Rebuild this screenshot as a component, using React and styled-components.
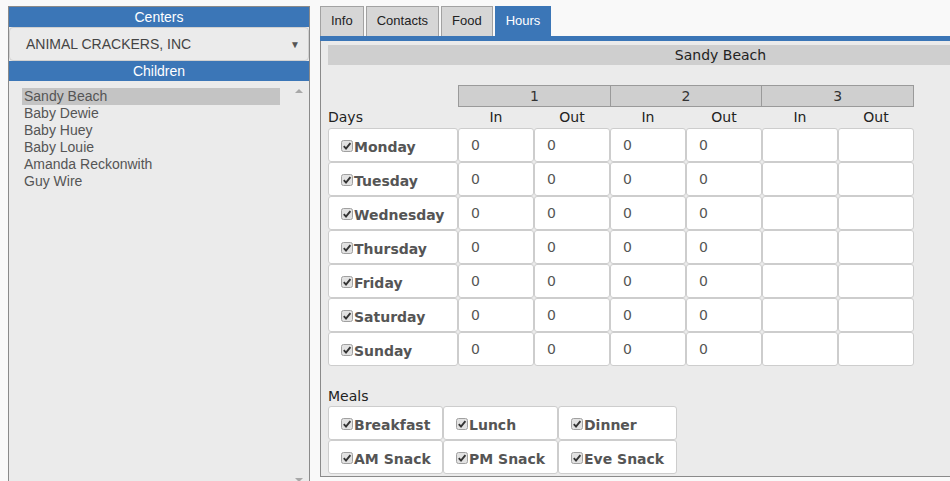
import styled, { createGlobalStyle } from "styled-components";

const GlobalStyle = createGlobalStyle`
    body {
        margin: 0;
        background-color: #f9f9f9;
        overflow: hidden;
    }
`

const Page = styled.div`
    display: flex;
    align-items: flex-start;
    gap: 10px;
    padding: 6px 0 0 8px;
    height: 481px;
    box-sizing: border-box;
`

const LeftPanel = styled.div`
    display: flex;
    flex-direction: column;
    flex: 0 0 302px;
    height: 480px;
    box-sizing: border-box;
    border: 1px solid #8a8a8a;
    border-bottom: none;
    background-color: #ebebeb;
    font-family: "Liberation Sans", Arial, sans-serif;
`

const SectionHeader = styled.div`
    height: 20px;
    line-height: 20px;
    background-color: #3b76b7;
    color: #fff;
    text-align: center;
    font-size: 14px;
`

const SelectBox = styled.div`
    display: flex;
    align-items: center;
    justify-content: space-between;
    height: 34px;
    box-sizing: border-box;
    padding: 0 8px 0 16px;
    border: 1px solid #d0d0d0;
    border-radius: 4px;
    font-size: 14px;
    color: #444;
`

const Arrow = styled.span`
    font-size: 10px;
    color: #555;
`

const ChildList = styled.div`
    position: relative;
    flex: 1;
    padding: 7px 29px 0 13px;
    font-size: 14px;
    color: #555;
`

const ChildItem = styled.div`
    height: 17px;
    line-height: 17px;
    padding-left: 2px;
    background-color: ${props => props.selected ? "#c4c4c4" : "transparent"};
`

const ScrollArrow = styled.span`
    position: absolute;
    right: 6px;
    width: 0;
    height: 0;
    border-left: 4px solid transparent;
    border-right: 4px solid transparent;
    ${props => props.down
        ? "bottom: 4px; border-top: 4px solid #a8a8a8;"
        : "top: 8px; border-bottom: 4px solid #a8a8a8;"}
`

const RightColumn = styled.div`
    flex: 0 0 801px;
    display: flex;
    flex-direction: column;
`

const TabBar = styled.div`
    display: flex;
    gap: 2px;
    height: 30px;
`

const Tab = styled.div`
    box-sizing: border-box;
    height: 30px;
    line-height: 28px;
    padding: 0 10px;
    border: 1px solid ${props => props.active ? "#3b76b7" : "#a2a2a2"};
    border-bottom: none;
    background-color: ${props => props.active ? "#3b76b7" : "#d6d6d6"};
    color: ${props => props.active ? "#fff" : "#222"};
    font-family: "Liberation Sans", Arial, sans-serif;
    font-size: 13px;
`

const BlueBar = styled.div`
    height: 5px;
    background-color: #3b76b7;
`

const ContentPanel = styled.div`
    padding: 4px 7px 2px 7px;
    border: 1px solid #8a8a8a;
    border-top: none;
    background-color: #ebebeb;
    font-family: "DejaVu Sans", Verdana, sans-serif;
    color: #222;
`

const NameBar = styled.div`
    height: 20px;
    line-height: 20px;
    margin-bottom: 20px;
    background-color: #cfcfcf;
    text-align: center;
    font-size: 14px;
`

const HoursGrid = styled.div`
    display: grid;
    grid-template-columns: 130px repeat(6, 76px);
    grid-template-rows: 22px 21px repeat(7, 34px);
`

const GroupRow = styled.div`
    grid-column: 2 / span 6;
    display: flex;
    border: 1px solid #9a9a9a;
    background-color: #cfcfcf;
`

const GroupCell = styled.div`
    flex: 1;
    text-align: center;
    line-height: 20px;
    font-size: 14px;
    color: #333;

    &:not(:first-child) {
        border-left: 1px solid #9a9a9a;
    }
`

const ColLabel = styled.div`
    line-height: 21px;
    font-size: 14px;
    text-align: ${props => props.left ? "left" : "center"};
`

const Cell = styled.div`
    display: flex;
    align-items: center;
    box-sizing: border-box;
    padding: 0 0 1px 12px;
    border: 1px solid #cdcdcd;
    border-radius: 3px;
    background-color: #fff;
    font-size: 14px;
    color: #555;
`

const CheckLabel = styled.span`
    padding: 4px 0 0 1px;
    font-weight: bold;
    font-size: 14px;
    color: #555;
`

const MealsTitle = styled.div`
    padding-top: 20px;
    line-height: 20px;
    font-size: 14px;
`

const MealGrid = styled.div`
    display: grid;
    grid-template-columns: 115px 115px 119px;
    grid-template-rows: repeat(2, 34px);
`

const CheckIcon = () => (
    <svg width="12" height="12" viewBox="0 0 12 12" style={{ flex: "0 0 12px", marginTop: 2 }}>
        <rect x="0.5" y="0.5" width="11" height="11" rx="2" fill="#e2e2e2" stroke="#a0a0a0" />
        <path d="M2.8 6.2 L5 8.6 L9.4 3.2" fill="none" stroke="#333" strokeWidth="1.9" />
    </svg>
)

const CheckCell = ({ label }) => (
    <Cell>
        <CheckIcon />
        <CheckLabel>{label}</CheckLabel>
    </Cell>
)

const children = ["Sandy Beach", "Baby Dewie", "Baby Huey", "Baby Louie", "Amanda Reckonwith", "Guy Wire"]
const tabs = ["Info", "Contacts", "Food", "Hours"]
const days = ["Monday", "Tuesday", "Wednesday", "Thursday", "Friday", "Saturday", "Sunday"]
const meals = ["Breakfast", "Lunch", "Dinner", "AM Snack", "PM Snack", "Eve Snack"]
// two shifts filled, third empty
const times = ["0", "0", "0", "0", "", ""]

const App = () => {
    return (
        <>
            <GlobalStyle />
            <Page>
                <LeftPanel>
                    <SectionHeader>Centers</SectionHeader>
                    <SelectBox>
                        <span>ANIMAL CRACKERS, INC</span>
                        <Arrow>▼</Arrow>
                    </SelectBox>
                    <SectionHeader>Children</SectionHeader>
                    <ChildList>
                        {children.map((name, i) => (
                            <ChildItem key={name} selected={i === 0}>{name}</ChildItem>
                        ))}
                        <ScrollArrow />
                        <ScrollArrow down />
                    </ChildList>
                </LeftPanel>

                <RightColumn>
                    <TabBar>
                        {tabs.map(t => (
                            <Tab key={t} active={t === "Hours"}>{t}</Tab>
                        ))}
                    </TabBar>
                    <BlueBar />
                    <ContentPanel>
                        <NameBar>Sandy Beach</NameBar>
                        <HoursGrid>
                            <div />
                            <GroupRow>
                                <GroupCell>1</GroupCell>
                                <GroupCell>2</GroupCell>
                                <GroupCell>3</GroupCell>
                            </GroupRow>
                            <ColLabel left>Days</ColLabel>
                            {["In", "Out", "In", "Out", "In", "Out"].map((l, i) => (
                                <ColLabel key={i}>{l}</ColLabel>
                            ))}
                            {days.map(day => [
                                <CheckCell key={day} label={day} />,
                                ...times.map((v, i) => (
                                    <Cell key={day + i}>{v}</Cell>
                                ))
                            ])}
                        </HoursGrid>
                        <MealsTitle>Meals</MealsTitle>
                        <MealGrid>
                            {meals.map(m => (
                                <CheckCell key={m} label={m} />
                            ))}
                        </MealGrid>
                    </ContentPanel>
                </RightColumn>
            </Page>
        </>
    );
};

export default App;
